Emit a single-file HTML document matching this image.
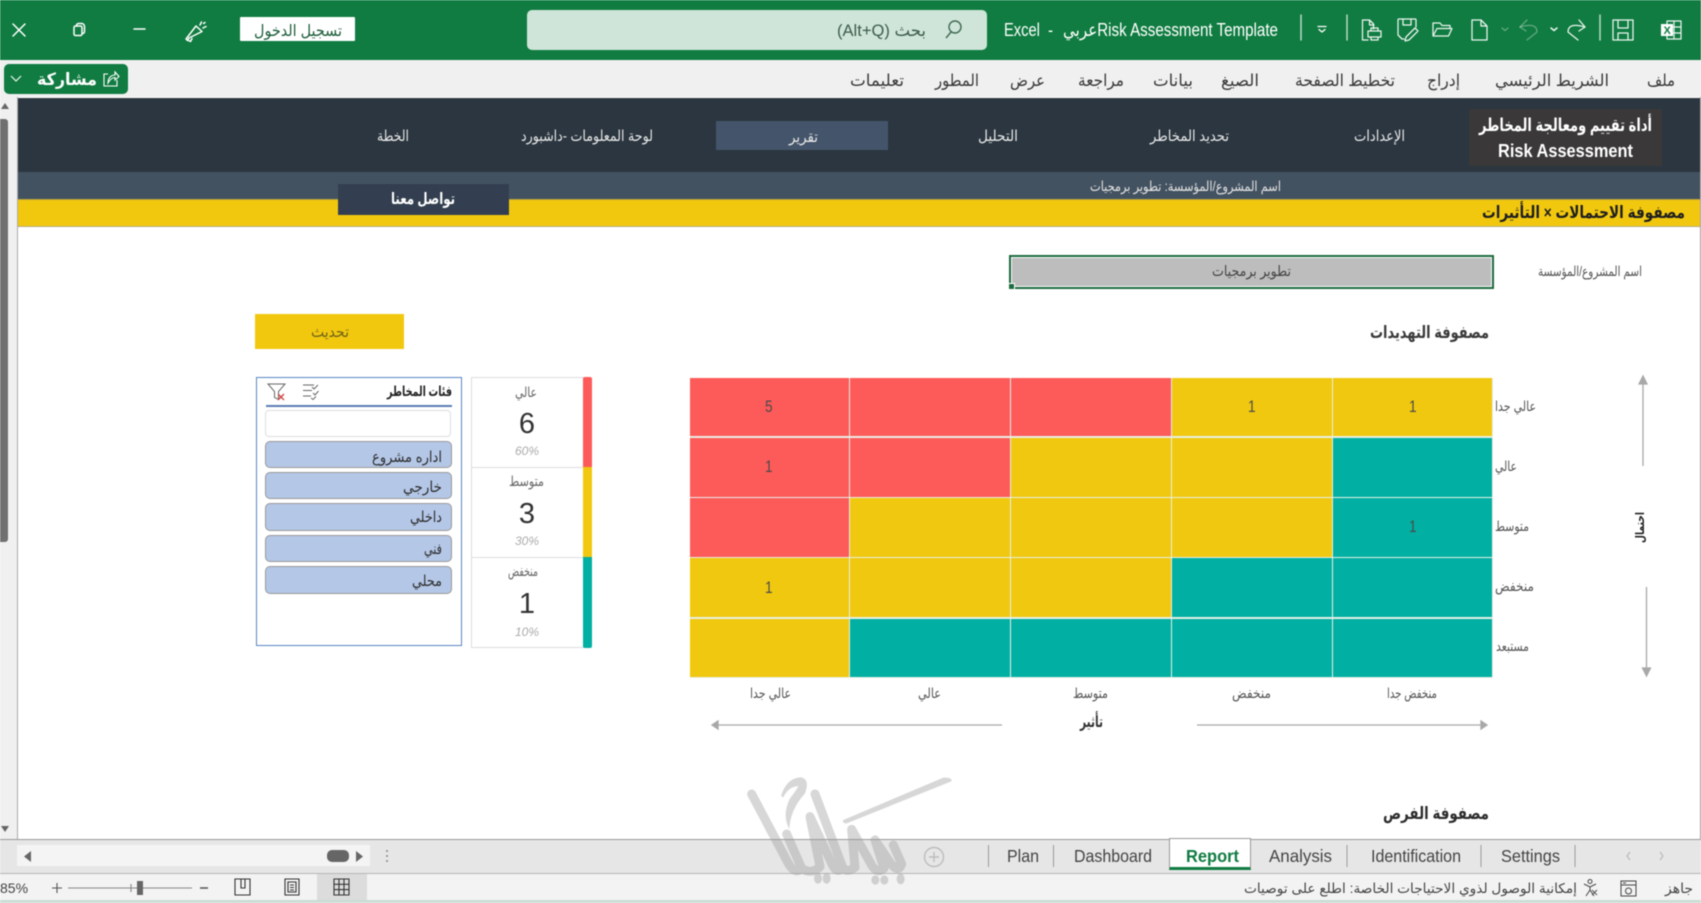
<!DOCTYPE html>
<html lang="ar">
<head>
<meta charset="utf-8">
<title>Risk Assessment Template - Excel</title>
<style>
html,body{margin:0;padding:0;width:1701px;height:903px;overflow:hidden;background:#fff;font-family:"Liberation Sans","DejaVu Sans",sans-serif}
#root{position:absolute;left:0;top:0;width:1701px;height:903px;overflow:hidden;filter:blur(.45px)}
.b{position:absolute;box-sizing:border-box}
#matrix{position:absolute;left:689.5px;top:377.5px;width:803px;height:300px;display:grid;grid-template-columns:repeat(5,1fr);grid-template-rows:repeat(5,1fr);gap:1.5px;background:#e9efe6}
#matrix div{display:flex;align-items:center;justify-content:center;font-size:17px;color:#4a4a4a}
#matrix span{display:block;transform:scaleX(.8)}
.r{background:#FD5A5A}.y{background:#F0C80F}.t{background:#01B0A2}
svg{position:absolute;left:0;top:0}
svg text{font-family:"Liberation Sans","DejaVu Sans",sans-serif}
</style>
</head>
<body>
<div id="root">
<!-- title bar -->
<div class="b" style="left:0;top:0;width:1701px;height:60px;background:#107C41"></div>
<div class="b" style="left:527px;top:10px;width:460px;height:40px;background:#CFE5D9;border-radius:5px"></div>
<div class="b" style="left:240px;top:17px;width:115px;height:24px;background:#fff;border-radius:1px"></div>
<!-- ribbon tabs -->
<div class="b" style="left:0;top:60px;width:1701px;height:38px;background:#F0F0F0"></div>
<div class="b" style="left:4px;top:64px;width:124px;height:30px;background:#107C41;border-radius:5px"></div>
<!-- side scrollbar -->
<div class="b" style="left:0;top:98px;width:17px;height:742px;background:#F0F0F0"></div>
<div class="b" style="left:0;top:119px;width:8px;height:423px;background:#707070;border-radius:0 3px 3px 0"></div>
<!-- sheet -->
<div class="b" style="left:17px;top:97px;width:1684px;height:743px;background:#fff;border-right:1.5px solid #999;border-left:1px solid #aaa"></div>
<div class="b" style="left:18px;top:98px;width:1682px;height:74px;background:#2B3640"></div>
<div class="b" style="left:18px;top:172px;width:1682px;height:27px;background:#435261"></div>
<div class="b" style="left:18px;top:199px;width:1682px;height:28px;background:#F2C80F;border-top:1px solid #b9a33c;border-bottom:1px solid #b5ad80"></div>
<div class="b" style="left:716px;top:121px;width:172px;height:29px;background:#44546A"></div>
<div class="b" style="left:1469px;top:109px;width:193px;height:57px;background:#3A3838"></div>
<div class="b" style="left:338px;top:184px;width:171px;height:31px;background:#333F50"></div>
<!-- project name cell -->
<div class="b" style="left:1009px;top:255px;width:485px;height:34px;background:#BDBDBD;border:2.5px solid #1D6B3F;outline:1px solid #fff;outline-offset:-3.5px"></div>
<div class="b" style="left:1008px;top:283px;width:7px;height:7px;background:#1D6B3F;border:1px solid #fff"></div>
<!-- update -->
<div class="b" style="left:255px;top:314px;width:149px;height:35px;background:#F2C80F"></div>
<!-- matrix -->
<div id="matrix">
<div class="r"><span>5</span></div><div class="r"></div><div class="r"></div><div class="y"><span>1</span></div><div class="y"><span>1</span></div>
<div class="r"><span>1</span></div><div class="r"></div><div class="y"></div><div class="y"></div><div class="t"></div>
<div class="r"></div><div class="y"></div><div class="y"></div><div class="y"></div><div class="t"><span>1</span></div>
<div class="y"><span>1</span></div><div class="y"></div><div class="y"></div><div class="t"></div><div class="t"></div>
<div class="y"></div><div class="t"></div><div class="t"></div><div class="t"></div><div class="t"></div>
</div>
<!-- cards -->
<div class="b" style="left:471px;top:377px;width:113px;height:91px;border:1px solid #ddd"></div>
<div class="b" style="left:471px;top:467px;width:113px;height:91px;border:1px solid #ddd"></div>
<div class="b" style="left:471px;top:557px;width:113px;height:91px;border:1px solid #ddd"></div>
<div class="b" style="left:583px;top:377px;width:9px;height:90px;background:#FD5A5A;border-radius:2px 2px 0 0"></div>
<div class="b" style="left:583px;top:467px;width:9px;height:90px;background:#F2C80F"></div>
<div class="b" style="left:583px;top:557px;width:9px;height:91px;background:#01B0A2;border-radius:0 0 2px 2px"></div>
<!-- slicer -->
<div class="b" style="left:256px;top:377px;width:206px;height:269px;border:1.5px solid #5B84C4;background:#fff"></div>
<div class="b" style="left:266px;top:405px;width:186px;height:1.5px;background:#5B7DB5"></div>
<div class="b" style="left:265px;top:410px;width:186px;height:27px;border:1.5px solid #ddd;border-radius:4px;background:#fff"></div>
<div class="b" style="left:265px;top:441px;width:187px;height:27px;background:#B4C7E7;border:1.5px solid #999;border-radius:5px"></div>
<div class="b" style="left:265px;top:472px;width:187px;height:27px;background:#B4C7E7;border:1.5px solid #999;border-radius:5px"></div>
<div class="b" style="left:265px;top:503px;width:187px;height:28px;background:#B4C7E7;border:1.5px solid #999;border-radius:5px"></div>
<div class="b" style="left:265px;top:535px;width:187px;height:27px;background:#B4C7E7;border:1.5px solid #999;border-radius:5px"></div>
<div class="b" style="left:265px;top:566px;width:187px;height:28px;background:#B4C7E7;border:1.5px solid #999;border-radius:5px"></div>
<!-- bottom bars -->
<div class="b" style="left:0;top:839px;width:1701px;height:35px;background:#E6E6E6;border-top:1.5px solid #999;border-bottom:1.5px solid #B5B5B5"></div>
<div class="b" style="left:17px;top:845px;width:353px;height:21px;background:#F4F4F4"></div>
<div class="b" style="left:1169px;top:838px;width:82px;height:32px;background:#fff;border:1px solid #999;border-bottom:3px solid #107C41;border-top-width:1px"></div>
<div class="b" style="left:0;top:874px;width:1701px;height:27px;background:#F3F3F3"></div>
<div class="b" style="left:317px;top:874px;width:50px;height:27px;background:#DCDCDC"></div>
<div class="b" style="left:0;top:900px;width:1701px;height:3px;background:#CADCD4"></div>

<svg width="1701" height="903" viewBox="0 0 1701 903" xmlns="http://www.w3.org/2000/svg">
<!-- window controls -->
<g fill="none" stroke="#fff" stroke-width="1.5" stroke-linecap="round" stroke-linejoin="round">
<path d="M13 24l12 12M25 24l-12 12"/>
<path d="M74 27.5a1.5 1.5 0 0 1 1.500-1.500h5a1.500 1.500 0 0 1 1.500 1.500v6.500a1.500 1.500 0 0 1-1.500 1.500h-5a1.500 1.500 0 0 1-1.500-1.500z"/>
<path d="M76.500 26v-.5a2 2 0 0 1 2-2h3a3 3 0 0 1 3 3v5a2 2 0 0 1-2 2"/>
<path d="M134 29h11"/>
<path d="M189 38l-1.500 2.500-1.500-1.500 10-13 6 5.500zM192 38.500l-1.500 3-3-1.500M200 25l1.500-3M203 28l3-1.500M203.500 23.500l1.500-1"/>
<path d="M1347 15v25M1301 15v25M1600 15v25" stroke-opacity=".7"/>
<path d="M1318 26.500h8" stroke-width="1.300"/><path d="M1319 29.500l3 2.500 3-2.500" stroke-width="1.300"/>
</g>
<g fill="none" stroke="#fff" stroke-width="1.250" stroke-linecap="round" stroke-linejoin="round" stroke-opacity=".92">
<!-- print preview -->
<path d="M1368 40h-5.500v-20h7l4 4v5M1369.500 20v5h4.500M1368 31h13v6h-13zM1371 31v-3h7v3M1371 37v3h7v-3"/>
<!-- save edit -->
<path d="M1398 35v-15a1 1 0 0 1 1-1h16a1 1 0 0 1 1 1v7M1403 19v6h8v-6M1398 35l4 4h2M1405 41l1-4 9-9 3 3-9 9z"/>
<!-- open -->
<path d="M1433 36v-13h7l2 2.500h8v3M1433 36l4-7.500h15l-3.500 7.500z"/>
<!-- new -->
<path d="M1472 20h9l6 6v14h-15zM1481 20v6h6"/>
<!-- undo -->
<g stroke-opacity=".35"><path d="M1520 27Q1537 22 1537 32L1527 40"/><path d="M1527 20l-7 7 6 4"/><path d="M1502 28l3 2.500 3-2.500"/></g>
<path d="M1551 28l3 2.500 3-2.500" stroke-width="1.500"/>
<!-- redo -->
<path d="M1585 27Q1568 22 1568 32L1578 40"/><path d="M1579 20l6 7-6 4"/>
<!-- save -->
<path d="M1613 20h20v20h-20zM1618 20v8h10v-8M1618 40v-7h10v7"/>
<path d="M1667 21h14v18h-14zM1667 27h14M1667 33h14M1674 21v18" stroke-width="1.200"/>
</g>
<rect x="1661" y="24" width="12" height="12" fill="#fff"/>
<text x="1663.500" y="34" font-size="11" font-weight="700" fill="#107C41">X</text>
<!-- magnifier -->
<g fill="none" stroke="#3f6a50" stroke-width="1.400"><circle cx="955" cy="27" r="6"/><path d="M951 32l-5 6"/></g>

<!-- title bar text -->
<text x="254" y="36" font-size="16" textLength="88" lengthAdjust="spacingAndGlyphs" fill="#1c5d3a">تسجيل الدخول</text>
<text x="837" y="36" font-size="16.500" textLength="89" lengthAdjust="spacingAndGlyphs" fill="#3d5c4b">(Alt+Q) بحث</text>
<text x="1004" y="36" font-size="18" textLength="49" lengthAdjust="spacingAndGlyphs" fill="#fff" xml:space="preserve">Excel  -</text>
<text x="1063" y="36" font-size="18" textLength="215" lengthAdjust="spacingAndGlyphs" fill="#fff">عربيRisk Assessment Template</text>

<!-- ribbon tabs -->
<g font-size="16.500" fill="#3a3a3a">
<text x="1647" y="86" textLength="28" lengthAdjust="spacingAndGlyphs">ملف</text>
<text x="1495" y="86" textLength="114" lengthAdjust="spacingAndGlyphs">الشريط الرئيسي</text>
<text x="1427" y="86" textLength="33" lengthAdjust="spacingAndGlyphs">إدراج</text>
<text x="1295" y="86" textLength="100" lengthAdjust="spacingAndGlyphs">تخطيط الصفحة</text>
<text x="1221" y="86" textLength="38" lengthAdjust="spacingAndGlyphs">الصيغ</text>
<text x="1153" y="86" textLength="40" lengthAdjust="spacingAndGlyphs">بيانات</text>
<text x="1078" y="86" textLength="46" lengthAdjust="spacingAndGlyphs">مراجعة</text>
<text x="1010" y="86" textLength="35" lengthAdjust="spacingAndGlyphs">عرض</text>
<text x="935" y="86" textLength="44" lengthAdjust="spacingAndGlyphs">المطور</text>
<text x="850" y="86" textLength="54" lengthAdjust="spacingAndGlyphs">تعليمات</text>
</g>
<!-- share -->
<text x="37" y="85" font-size="17" font-weight="700" textLength="60" lengthAdjust="spacingAndGlyphs" fill="#fff">مشاركة</text>
<g fill="none" stroke="#fff" stroke-width="1.100"><path d="M11 76l5 5 5-5"/><path d="M108 74h-4v12h13v-6M108 83c0-5 3-8 7-8v-3l4 4.500-4 3.500v-2.500c-3 0-5 2-7 5.500z"/></g>

<!-- scrollbar arrows -->
<path d="M1 109l4-6 4 6z" fill="#666"/><path d="M1 826l4 6 4-6z" fill="#666"/>

<!-- nav -->
<g font-size="15" fill="#E8E8E8">
<text x="377" y="141" textLength="32" lengthAdjust="spacingAndGlyphs">الخطة</text>
<text x="521" y="141" textLength="132" lengthAdjust="spacingAndGlyphs">لوحة المعلومات -داشبورد</text>
<text x="789" y="142" textLength="29" lengthAdjust="spacingAndGlyphs">تقرير</text>
<text x="978" y="141" textLength="40" lengthAdjust="spacingAndGlyphs">التحليل</text>
<text x="1150" y="141" textLength="79" lengthAdjust="spacingAndGlyphs">تحديد المخاطر</text>
<text x="1354" y="141" textLength="51" lengthAdjust="spacingAndGlyphs">الإعدادات</text>
</g>
<text x="1479" y="131" font-size="17.500" font-weight="700" textLength="173" lengthAdjust="spacingAndGlyphs" fill="#fff">أداة تقييم ومعالجة المخاطر</text>
<text x="1498" y="157" font-size="18" font-weight="700" textLength="135" lengthAdjust="spacingAndGlyphs" fill="#fff">Risk Assessment</text>
<text x="1090" y="191" font-size="13.500" textLength="191" lengthAdjust="spacingAndGlyphs" fill="#E4E4E4">اسم المشروع/المؤسسة: تطوير برمجيات</text>
<text x="1482" y="218" font-size="17" font-weight="700" textLength="203" lengthAdjust="spacingAndGlyphs" fill="#1E1E1E">مصفوفة الاحتمالات × التأثيرات</text>
<text x="391" y="204" font-size="16" font-weight="700" textLength="64" lengthAdjust="spacingAndGlyphs" fill="#fff">تواصل معنا</text>

<!-- body -->
<text x="1538" y="276" font-size="14" textLength="104" lengthAdjust="spacingAndGlyphs" fill="#555">اسم المشروع/المؤسسة</text>
<text x="1212" y="276" font-size="14.500" textLength="79" lengthAdjust="spacingAndGlyphs" fill="#444">تطوير برمجيات</text>
<text x="1370" y="338" font-size="17" font-weight="700" textLength="119" lengthAdjust="spacingAndGlyphs" fill="#3a3a3a">مصفوفة التهديدات</text>
<text x="1383" y="819" font-size="17" font-weight="700" textLength="106" lengthAdjust="spacingAndGlyphs" fill="#2c2c2c">مصفوفة الفرص</text>
<text x="311" y="337" font-size="15" textLength="38" lengthAdjust="spacingAndGlyphs" fill="#6F6318">تحديث</text>

<!-- row labels -->
<g font-size="14" fill="#555">
<text x="1495" y="411" textLength="41" lengthAdjust="spacingAndGlyphs">عالي جدا</text>
<text x="1495" y="471" textLength="22" lengthAdjust="spacingAndGlyphs">عالي</text>
<text x="1495" y="531" textLength="34" lengthAdjust="spacingAndGlyphs">متوسط</text>
<text x="1495" y="591" textLength="39" lengthAdjust="spacingAndGlyphs">منخفض</text>
<text x="1496" y="651" textLength="33" lengthAdjust="spacingAndGlyphs">مستبعد</text>
<text x="750" y="698" textLength="41" lengthAdjust="spacingAndGlyphs">عالي جدا</text>
<text x="918" y="698" textLength="23" lengthAdjust="spacingAndGlyphs">عالي</text>
<text x="1073" y="698" textLength="35" lengthAdjust="spacingAndGlyphs">متوسط</text>
<text x="1232" y="698" textLength="39" lengthAdjust="spacingAndGlyphs">منخفض</text>
<text x="1387" y="698" textLength="50" lengthAdjust="spacingAndGlyphs">منخفض جدا</text>
</g>
<text x="1080" y="727" font-size="16" font-weight="700" textLength="23" lengthAdjust="spacingAndGlyphs" fill="#333">تأثير</text>
<text transform="translate(1644 543) rotate(-90)" x="0" y="0" font-size="12" font-weight="700" textLength="31" lengthAdjust="spacingAndGlyphs" fill="#222">احتمال</text>

<!-- arrows -->
<g stroke="#A8A8A8" stroke-width="1.300" fill="#A8A8A8">
<path d="M716 725H1002" fill="none"/><path d="M712 725l6-4v8z"/>
<path d="M1197 725H1483" fill="none"/><path d="M1487 725l-6-4v8z"/>
<path d="M1643 382V466" fill="none"/><path d="M1643 376l-4 8h8z"/>
<path d="M1646.500 587V670" fill="none"/><path d="M1646.500 676l-4-8h8z"/>
</g>

<!-- cards text -->
<g text-anchor="middle">
<text x="527" y="433" font-size="29" fill="#333">6</text>
<text x="527" y="523" font-size="29" fill="#333">3</text>
<text x="527" y="613" font-size="29" fill="#333">1</text>
<text x="527" y="455" font-size="12" font-style="italic" fill="#ABABAB">60%</text>
<text x="527" y="545" font-size="12" font-style="italic" fill="#ABABAB">30%</text>
<text x="527" y="636" font-size="12" font-style="italic" fill="#ABABAB">10%</text>
</g>
<g font-size="14" fill="#666">
<text x="515" y="397" textLength="22" lengthAdjust="spacingAndGlyphs">عالي</text>
<text x="509" y="486" textLength="35" lengthAdjust="spacingAndGlyphs">متوسط</text>
<text x="508" y="576" textLength="30" lengthAdjust="spacingAndGlyphs">منخفض</text>
</g>

<!-- slicer text -->
<text x="387" y="396" font-size="14" font-weight="700" textLength="65" lengthAdjust="spacingAndGlyphs" fill="#222">فئات المخاطر</text>
<g font-size="15" fill="#2e2e2e">
<text x="372" y="462" textLength="70" lengthAdjust="spacingAndGlyphs">اداره مشروع</text>
<text x="403" y="492" textLength="39" lengthAdjust="spacingAndGlyphs">خارجي</text>
<text x="410" y="522" textLength="32" lengthAdjust="spacingAndGlyphs">داخلي</text>
<text x="424" y="554" textLength="18" lengthAdjust="spacingAndGlyphs">فني</text>
<text x="412" y="586" textLength="30" lengthAdjust="spacingAndGlyphs">محلي</text>
</g>
<!-- slicer icons -->
<g fill="none" stroke="#666" stroke-width="1">
<path d="M268 384h17l-6.500 7.500v8l-4-2v-6z"/>
<path d="M303 385h11M303 390.500h9M303 396h8M312 387l2 2 4-4M313 393l2 2 3.500-4M311 398l2 1.500 3-3"/>
</g>
<path d="M278 394l6 6M284 394l-6 6" stroke="#D04040" stroke-width="1.300" fill="none"/>

<!-- sheet tabs -->
<g stroke="#9A9A9A" stroke-width="1" fill="none"><path d="M988.500 845v22M1053.500 845v22M1347 845v22M1481 845v22M1575 845v22"/></g>
<g font-size="17.500" fill="#444">
<text x="1007" y="862" textLength="32" lengthAdjust="spacingAndGlyphs">Plan</text>
<text x="1074" y="862" textLength="78" lengthAdjust="spacingAndGlyphs">Dashboard</text>
<text x="1269" y="862" textLength="63" lengthAdjust="spacingAndGlyphs">Analysis</text>
<text x="1371" y="862" textLength="90" lengthAdjust="spacingAndGlyphs">Identification</text>
<text x="1501" y="862" textLength="59" lengthAdjust="spacingAndGlyphs">Settings</text>
</g>
<text x="1186" y="862" font-size="17.500" font-weight="700" textLength="53" lengthAdjust="spacingAndGlyphs" fill="#107C41">Report</text>
<g fill="none" stroke="#BBB" stroke-width="1.200"><path d="M1630 852l-3 4 3 4M1660 852l3 4-3 4"/></g>
<!-- horizontal scroll -->
<path d="M31 851l-7 5.500 7 5.500z" fill="#666"/><path d="M356 851l7 5.500-7 5.500z" fill="#666"/>
<rect x="327" y="850" width="22" height="12" rx="5" fill="#666"/>
<circle cx="387" cy="851" r="1" fill="#888"/><circle cx="387" cy="856" r="1" fill="#888"/><circle cx="387" cy="861" r="1" fill="#888"/>

<!-- status bar -->
<text x="0" y="893" font-size="14" fill="#444">85%</text>
<g fill="none" stroke="#555" stroke-width="1.100">
<path d="M52 888h10M57 883v10" />
<path d="M68 888H192" stroke="#888"/><path d="M131 884v8" stroke="#888"/>
<path d="M200 888h8" stroke-width="1.500"/>
<path d="M235 879h15v16h-15zM241 879v9h4v-9" stroke="#333"/>
<path d="M285 879h14v16h-14zM288 882h8v10h-8zM290 885h4M290 887.500h4M290 890h4" stroke="#333"/>
<path d="M334 879h15v16h-15zM334 884.300h15M334 889.600h15M339 879v16M344 879v16" stroke="#333"/>
</g>
<rect x="137" y="881" width="6" height="14" fill="#666"/>
<text x="1244" y="893" font-size="13.500" textLength="333" lengthAdjust="spacingAndGlyphs" fill="#444">إمكانية الوصول لذوي الاحتياجات الخاصة: اطلع على توصيات</text>
<text x="1665" y="893" font-size="13.500" textLength="28" lengthAdjust="spacingAndGlyphs" fill="#444">جاهز</text>
<g fill="none" stroke="#444" stroke-width="1">
<path d="M1621 881h15v15h-15zM1621 885h15M1623 883h3"/><circle cx="1628.500" cy="891" r="3"/>
<circle cx="1590" cy="881.500" r="2"/><path d="M1584 884l6 3 6-3M1590 887v3l-4 6M1590 890l4 6"/>
<path d="M1592 890l5 5M1597 890l-5 5" stroke="#555"/>
</g>

<!-- plus button -->
<g fill="none" stroke="#BDBDBD" stroke-width="1.400"><circle cx="934" cy="857" r="9.500"/><path d="M929 857h10M934 852v10"/></g>

<!-- watermark -->
<g transform="translate(730 760) scale(.3333)" opacity=".4">
<g fill="none" stroke="#9C9C9C" stroke-linecap="round" stroke-linejoin="round" stroke-width="27">
<path d="M65 102L175 310Q195 345 215 325L170 222"/>
<path d="M215 325Q245 345 270 320L240 170L305 310Q320 345 338 322L255 102"/>
<path d="M338 322Q350 340 375 322L365 208L422 310Q440 345 462 325L435 240L482 310Q505 340 515 312L490 255"/>
</g>
<g fill="#9C9C9C">
<path d="M153 108Q170 52 215 52Q240 60 225 100Q180 150 178 207Q155 165 180 115Q200 90 205 78Q175 80 160 112Z"/>
<path d="M340 180L640 53Q668 52 664 64L350 190Q335 190 340 180Z"/>
<ellipse cx="264" cy="355" rx="12" ry="16"/><ellipse cx="290" cy="355" rx="12" ry="16"/>
<ellipse cx="436" cy="360" rx="12" ry="14"/><ellipse cx="463" cy="360" rx="12" ry="14"/><ellipse cx="512" cy="357" rx="12" ry="16"/>
</g>
</g>
</svg>
</div>
</body>
</html>
